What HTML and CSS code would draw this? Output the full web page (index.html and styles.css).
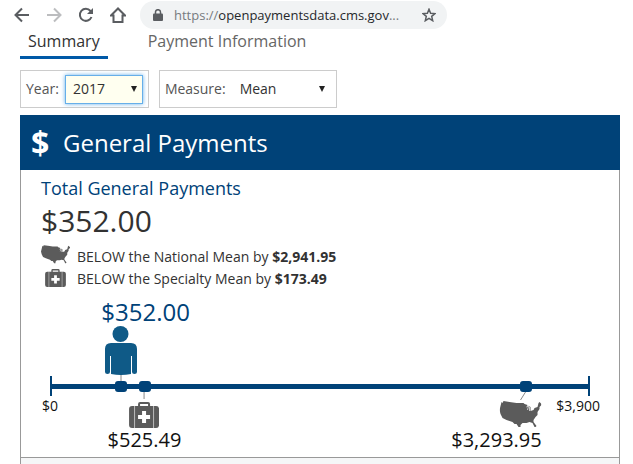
FILE: index.html
```html
<!DOCTYPE html>
<html lang="en">
<head>
  <meta charset="UTF-8">
  <meta name="viewport" content="width=device-width, initial-scale=1.0">
  <title>Open Payments - General Payments</title>
  <link rel="stylesheet" href="styles.css">
</head>
<body>

<!-- shared icons -->
<svg class="sprite" aria-hidden="true">
  <symbol id="usa" viewBox="0 0 42 27">
    <path d="M2 1 L3 2 L4 0 L10 1 L17 2 L24 2 L25 3 L28 4 L27 6 L29 5 L31 6 L31 10 L34 9 L35 7 L38 6 L39 2 L40 1 L42 3 L42 4 L40 6 L40 8 L38 11 L38 14 L36 16 L34 19 L34 21 L37 25 L36 26 L35 26 L33 22 L30 21 L27 22 L23 22 L21 24 L21 26 L19 26 L17 23 L15 23 L13 21 L10 20 L7 19 L3 17 L1 13 L0 9 L1 5 Z"/>
    <path class="lake" d="M27 6 L29 5 L28 9 M30 6 L30 10"/>
  </symbol>
  <symbol id="medkit" viewBox="0 0 30 26">
    <path d="M9 5 V2 Q9 0 11 0 H19 Q21 0 21 2 V5 H19 V2 H11 V5 Z"/>
    <path class="strap" d="M4 4 H7 V26 H4 Z M23 4 H26 V26 H23 Z"/>
    <path d="M3 4 H5 V26 H3 Q0 26 0 23 V7 Q0 4 3 4 Z M6 4 H24 V26 H6 Z M25 4 H27 Q30 4 30 7 V23 Q30 26 27 26 H25 Z"/>
    <path class="cross" d="M13 9 H17 V13 H21 V17 H17 V21 H13 V17 H9 V13 H13 Z"/>
  </symbol>
</svg>

<header class="browser-bar">
  <button type="button" class="nav-btn" aria-label="Back">
    <svg width="16" height="16" viewBox="0 0 16 16"><path d="M15 8H2M8 1.500L1.500 8L8 14.500"/></svg>
  </button>
  <button type="button" class="nav-btn disabled" aria-label="Forward" disabled>
    <svg width="16" height="16" viewBox="0 0 16 16"><path d="M1 8H14M8 1.500L14.500 8L8 14.500"/></svg>
  </button>
  <button type="button" class="nav-btn" aria-label="Reload">
    <svg width="16" height="16" viewBox="0 0 16 16"><path d="M13.500 10A6 6 0 1 1 12.500 4L14 6"/><path class="solid" d="M15 1V7H9Z"/></svg>
  </button>
  <button type="button" class="nav-btn" aria-label="Home">
    <svg width="16" height="16" viewBox="0 0 16 16"><path d="M1 8.500L8 1.500L15 8.500H12.500V15H3.500V8.500Z"/></svg>
  </button>
  <div class="address">
    <svg class="lock" width="10" height="12" viewBox="0 0 10 12"><path d="M1 4.500H9Q10 4.500 10 5.500V11Q10 12 9 12H1Q0 12 0 11V5.500Q0 4.500 1 4.500Z"/><path class="shackle" d="M2.500 5V3A2.500 2.300 0 0 1 7.500 3V5"/></svg>
    <span class="url">https://<b>openpaymentsdata.cms.gov</b>...</span>
    <button type="button" class="star" aria-label="Bookmark">
      <svg width="14" height="14" viewBox="0 0 14 14"><path d="M7 1.300L8.600 5.300L13 5.600L9.700 8.400L10.700 12.700L7 10.400L3.300 12.700L4.300 8.400L1 5.600L5.400 5.300Z"/></svg>
    </button>
  </div>
</header>

<nav class="tabs">
  <a href="#summary" class="tab active">Summary</a>
  <a href="#payments" class="tab">Payment Information</a>
</nav>

<main class="content">
  <form class="filters">
    <div class="filter">
      <label for="year">Year:</label>
      <span class="select year">
        <select id="year">
          <option>2017</option>
        </select>
      </span>
    </div>
    <div class="filter">
      <label for="measure">Measure:</label>
      <span class="select measure">
        <select id="measure">
          <option>Mean</option>
        </select>
      </span>
    </div>
  </form>

  <section class="panel" id="summary">
    <h1 class="panel-title"><span class="dollar">$</span>General Payments</h1>

    <div class="panel-body">
      <h2 class="total-label">Total General Payments</h2>
      <p class="total">$352.00</p>
      <ul class="compare">
        <li>
          <svg class="compare-map" width="29" height="19"><use href="#usa"/></svg>
          <span>BELOW the National Mean by <strong>$2,941.95</strong></span>
        </li>
        <li>
          <svg width="29" height="18"><use href="#medkit"/></svg>
          <span>BELOW the Specialty Mean by <strong>$173.49</strong></span>
        </li>
      </ul>

      <div class="scale">
        <div class="axis"></div>
        <span class="limit min">$0</span>
        <span class="limit max">$3,900</span>

        <div class="marker provider" style="left: 13.2%">
          <span class="value">$352.00</span>
          <svg width="40" height="60" viewBox="0 0 40 60">
            <path class="lead" d="M20 48V56"/>
            <circle cx="19.500" cy="8" r="8"/>
            <path d="M10 17H30Q36 17 36 23V46Q36 48 33.500 48Q31 48 31 46V30H30V48Q20 50 10 48V30H9V46Q9 48 6.500 48Q4 48 4 46V23Q4 17 10 17Z"/>
          </svg>
        </div>
        <div class="marker specialty" style="left: 17.5%">
          <svg width="30" height="38" viewBox="0 0 30 38"><path class="lead" d="M15 0V9"/><use href="#medkit" y="12" width="30" height="26"/></svg>
          <span class="value">$525.49</span>
        </div>
        <div class="marker national" style="left: 88.1%">
          <svg width="42" height="38" viewBox="0 0 42 38"><path class="lead" d="M26 2L21 10"/><use href="#usa" y="11" width="42" height="27"/></svg>
          <span class="value">$3,293.95</span>
        </div>
        <i class="dot" style="left: 13.2%"></i>
        <i class="dot" style="left: 17.5%"></i>
        <i class="dot" style="left: 88.1%"></i>
      </div>
    </div>
    <div class="panel-foot"></div>
  </section>
</main>

</body>
</html>
```
FILE: styles.css
```css
* {
  box-sizing: border-box;
}

body {
  font-family: 'Open Sans', 'Noto Sans', sans-serif;
  font-size: 14px;
  background: #fff;
  color: #323232;
  margin: 0;
  min-height: 100vh;
  display: flex;
  flex-direction: column;
}

button {
  background: none;
  border: none;
  padding: 0;
}

svg {
  display: block;
}

.sprite {
  position: absolute;
  width: 0;
  height: 0;
}

/* browser bar */
.browser-bar {
  display: flex;
  align-items: center;
  gap: 16px;
  height: 30px;
  padding-left: 14px;
}

.nav-btn svg,
.star svg {
  fill: none;
  stroke: #5a5d61;
  stroke-width: 2;
}

.nav-btn .solid {
  fill: #5a5d61;
  stroke: none;
}

.nav-btn.disabled svg {
  stroke: #bcbdbf;
}

.address {
  display: flex;
  align-items: center;
  width: 307px;
  height: 28px;
  margin-left: -2px;
  padding: 0 11px 0 13px;
  border-radius: 14px;
  background: #f1f3f4;
}

.lock {
  fill: #5a5d61;
}

.lock .shackle {
  fill: none;
  stroke: #5a5d61;
  stroke-width: 1.5;
}

.url {
  flex: 1;
  padding-left: 11px;
  color: #777b7f;
  font-size: 13px;
  white-space: nowrap;
}

.url b {
  font-weight: normal;
  color: #26282b;
}

.star svg {
  stroke-width: 1.5;
}

/* tabs */
.tabs {
  display: flex;
  gap: 32px;
  padding-left: 20px;
}

.tab {
  height: 29px;
  padding: 0 8px;
  border-bottom: 3px solid transparent;
  color: #666;
  font-size: 16px;
  line-height: 22px;
  text-decoration: none;
}

.tab.active {
  color: #323232;
  border-bottom-color: #0059a7;
}

.content {
  flex: 1;
  display: flex;
  flex-direction: column;
  padding: 11px 13px 0 20px;
}

/* filters */
.filters {
  display: flex;
  gap: 10px;
  margin-bottom: 7px;
}

.filter {
  display: flex;
  align-items: center;
  gap: 6px;
  height: 38px;
  padding: 0 5px;
  border: 1px solid #ccc;
}

.filter label {
  color: #555;
  line-height: 18px;
}

.select {
  position: relative;
}

.select::after {
  content: '';
  position: absolute;
  right: 6px;
  top: 11px;
  border: 3px solid transparent;
  border-top: 6px solid #222;
  border-bottom: none;
  pointer-events: none;
}

.select select {
  appearance: none;
  display: block;
  width: 100%;
  height: 29px;
  padding: 0 7px 2px;
  border: 1px solid transparent;
  background: transparent;
  color: #323232;
  font: inherit;
}

.year {
  width: 78px;
}

.measure {
  width: 99px;
}

.year select {
  border-color: #66afe9;
  background: #fffff0;
  box-shadow: 0 0 4px #66afe9;
}

/* payments panel */
.panel {
  flex: 1;
  display: flex;
  flex-direction: column;
}

.panel-title {
  display: flex;
  align-items: center;
  height: 55px;
  margin: 0;
  padding-left: 11px;
  background: #004278;
  color: #fff;
  font-size: 24px;
  font-weight: normal;
}

.dollar {
  width: 32px;
  font-size: 32px;
  line-height: 40px;
  font-weight: bold;
}

.panel-body {
  padding: 6px 20px 0;
  border: 1px solid #999;
  border-top: none;
}

.total-label {
  margin: 0;
  color: #004278;
  font-size: 18px;
  font-weight: normal;
  line-height: 24px;
}

.total {
  margin: 0;
  font-size: 30px;
  line-height: 42px;
}

.compare {
  list-style: none;
  margin: 0;
  padding: 3px 0 0;
}

.compare li {
  display: flex;
  align-items: center;
  gap: 7px;
  height: 22px;
}

.compare svg,
.marker svg {
  fill: #5b5b5b;
}

.compare .compare-map {
  align-self: flex-start;
}

.cross {
  fill: #fff;
}

.marker .strap,
.strap {
  fill: #bbb;
}

.lake {
  fill: none;
  stroke: #ccc;
}

/* scale */
.scale {
  position: relative;
  height: 168px;
  margin: 0 9px;
}

.axis {
  position: absolute;
  left: 0;
  right: 0;
  top: 87px;
  height: 20px;
  border: solid #004278;
  border-width: 0 2px;
  background: linear-gradient(#004278, #004278) center / 100% 5px no-repeat;
}

.limit {
  position: absolute;
  top: 107px;
  color: #111;
  line-height: 20px;
}

.limit.min {
  left: 0;
  margin-left: -8px;
}

.limit.max {
  right: 0;
  margin-right: -10px;
}

.marker {
  position: absolute;
  display: flex;
  flex-direction: column;
  color: #111;
  font-size: 20px;
  line-height: 24px;
}

.marker .lead {
  stroke: #888;
  fill: none;
}

.provider {
  top: 9px;
  margin-left: -20px;
  color: #004278;
  font-size: 24px;
  line-height: 28px;
}

.provider svg {
  fill: #0f5a87;
}

.specialty {
  top: 101px;
  align-items: center;
  transform: translateX(-50%);
}

.national {
  top: 101px;
  align-items: flex-end;
  margin-left: 16px;
  transform: translateX(-100%);
}

.dot {
  position: absolute;
  top: 92px;
  width: 12px;
  height: 11px;
  margin-left: -6px;
  border-radius: 3px;
  background: #004278;
}

.panel-foot {
  flex: 1;
  border: solid #999;
  border-width: 0 1px;
  background: #f5f6f7;
}
```
